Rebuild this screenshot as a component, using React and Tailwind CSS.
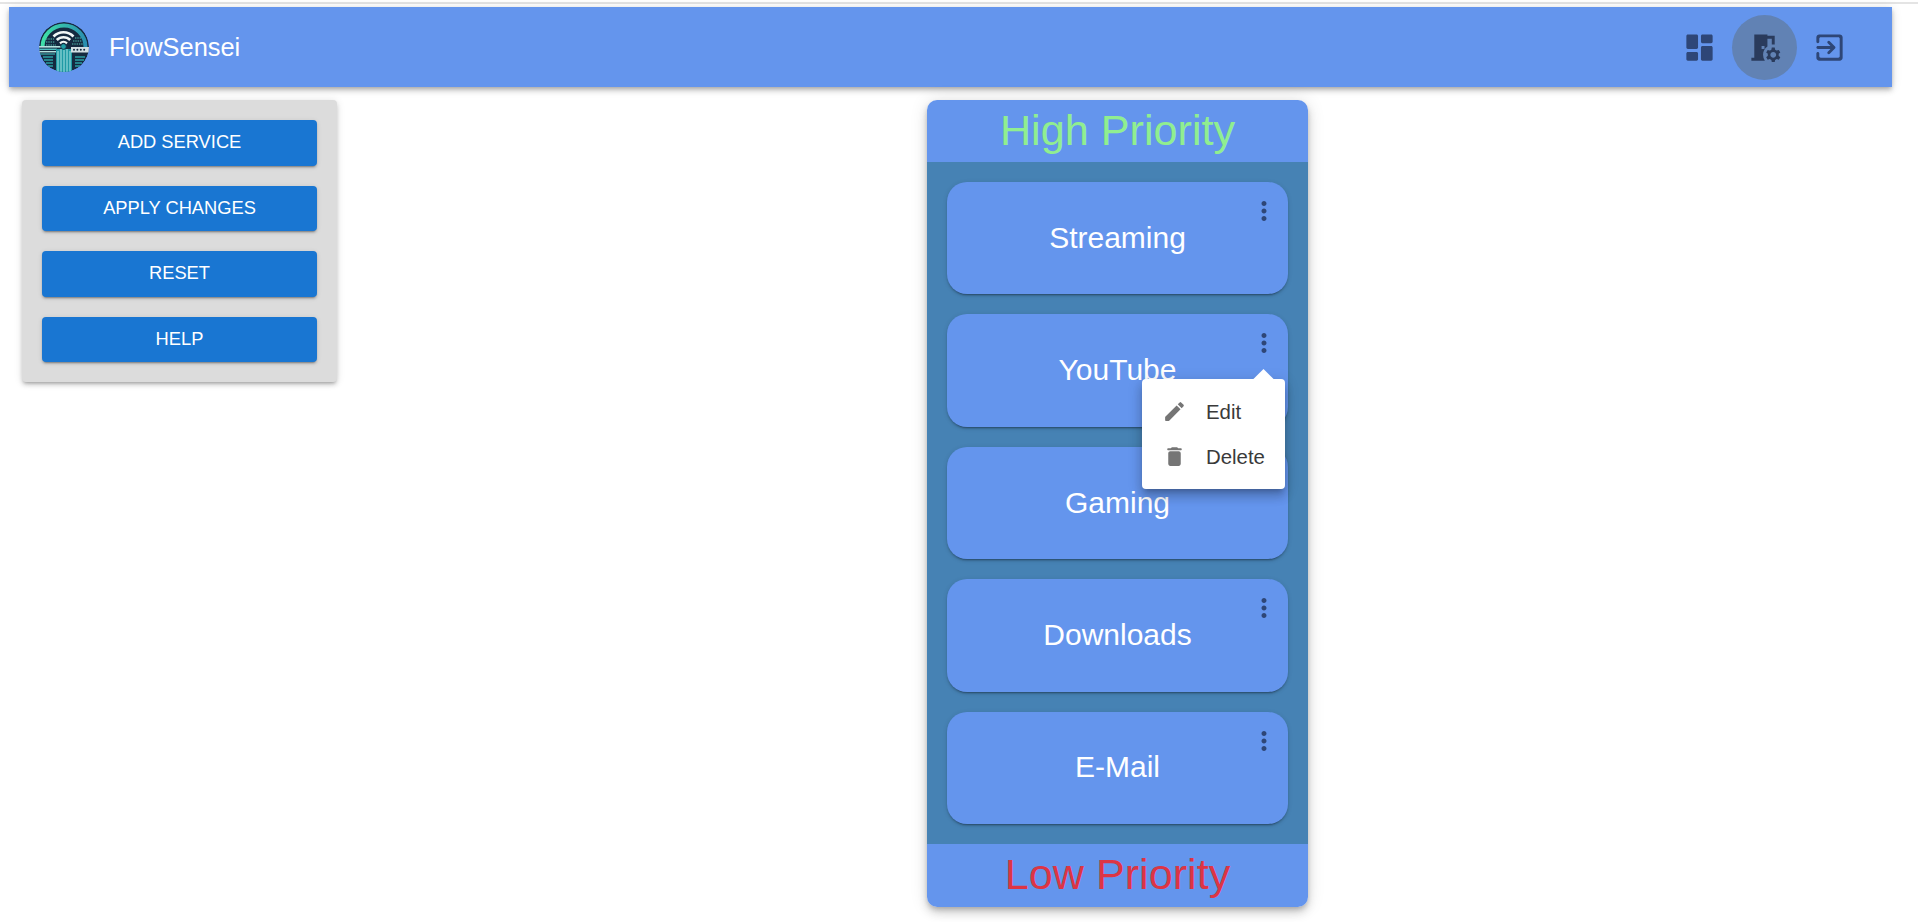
import React from 'react';
import { MdRoomPreferences, MdMoreVert } from 'react-icons/md';

const actions = ['ADD SERVICE', 'APPLY CHANGES', 'RESET', 'HELP'];
const services = ['Streaming', 'YouTube', 'Gaming', 'Downloads', 'E-Mail'];

// rounded variants, react-icons only ships the sharp ones
const Icon = ({ d, className }) => (
  <svg viewBox="0 0 24 24" fill="currentColor" className={className}>
    <path d={d} />
  </svg>
);

const dashboardPath = 'M4 13h6c.55 0 1-.45 1-1V4c0-.55-.45-1-1-1H4c-.55 0-1 .45-1 1v8c0 .55.45 1 1 1zm0 8h6c.55 0 1-.45 1-1v-4c0-.55-.45-1-1-1H4c-.55 0-1 .45-1 1v4c0 .55.45 1 1 1zm10 0h6c.55 0 1-.45 1-1v-8c0-.55-.45-1-1-1h-6c-.55 0-1 .45-1 1v8c0 .55.45 1 1 1zM13 4v4c0 .55.45 1 1 1h6c.55 0 1-.45 1-1V4c0-.55-.45-1-1-1h-6c-.55 0-1 .45-1 1z';
const exitPath = 'M10.79 16.29c.39.39 1.02.39 1.41 0l3.59-3.59c.39-.39.39-1.02 0-1.41L12.2 7.7a.9959.9959 0 0 0-1.41 0c-.39.39-.39 1.02 0 1.41L12.67 11H4c-.55 0-1 .45-1 1s.45 1 1 1h8.67l-1.88 1.88c-.39.39-.38 1.03 0 1.41zM19 3H5c-1.11 0-2 .9-2 2v3c0 .55.45 1 1 1s1-.45 1-1V6c0-.55.45-1 1-1h12c.55 0 1 .45 1 1v12c0 .55-.45 1-1 1H6c-.55 0-1-.45-1-1v-2c0-.55-.45-1-1-1s-1 .45-1 1v3c0 1.1.9 2 2 2h14c1.1 0 2-.9 2-2V5c0-1.1-.9-2-2-2z';
const editPath = 'M3 17.46v3.04c0 .28.22.5.5.5h3.04c.13 0 .26-.05.35-.15L17.81 9.94l-3.75-3.75L3.15 17.1c-.1.1-.15.22-.15.36zM20.71 7.04c.39-.39.39-1.02 0-1.41l-2.34-2.34a.9959.9959 0 0 0-1.41 0l-1.83 1.83 3.75 3.75 1.83-1.83z';
const deletePath = 'M6 19c0 1.1.9 2 2 2h8c1.1 0 2-.9 2-2V9c0-1.1-.9-2-2-2H8c-1.1 0-2 .9-2 2v10zM18 4h-2.5l-.71-.71c-.18-.18-.44-.29-.7-.29H9.91c-.26 0-.52.11-.7.29L8.5 4H6c-.55 0-1 .45-1 1s.45 1 1 1h12c.55 0 1-.45 1-1s-.45-1-1-1z';

const Logo = () => (
  <svg viewBox="0 0 50 50" className="w-[50px] h-[50px]">
    <defs>
      <clipPath id="logo-clip"><circle cx="25" cy="25" r="25" /></clipPath>
      <linearGradient id="logo-ring" x1="0" y1="0" x2="1" y2="0">
        <stop offset="0" stopColor="#3fe0a8" />
        <stop offset="1" stopColor="#2a8fb0" />
      </linearGradient>
    </defs>
    <g clipPath="url(#logo-clip)">
      <circle cx="25" cy="25" r="25" fill="#152a40" />
      {/* outer ring */}
      <path d="M3.5 25A21.5 21.5 0 0 1 46.5 25" fill="none" stroke="url(#logo-ring)" strokeWidth="4" />
      {/* small grid blocks */}
      <path d="M7 17h8M7 20h9M7 23h10M36 16h6M34 19h9M33 22h11" stroke="#3f8f8c" strokeWidth="1.4" strokeDasharray="1.4 0.9" />
      {/* wifi arcs */}
      <path d="M14.5 14.5A14 14 0 0 1 34.5 14.5" fill="none" stroke="#f1f7f7" strokeWidth="2.6" />
      <path d="M17.8 18A9.5 9.5 0 0 1 31.2 18" fill="none" stroke="#f1f7f7" strokeWidth="2.6" />
      <path d="M21 21.4A5 5 0 0 1 28 21.4" fill="none" stroke="#f1f7f7" strokeWidth="2.2" />
      {/* horizontal traces */}
      <rect x="0" y="24" width="22" height="1.6" fill="#b5e3e0" />
      <rect x="0" y="26.6" width="18" height="1.4" fill="#4fc0bf" />
      <rect x="0" y="29" width="17" height="1.4" fill="#b5e3e0" />
      <rect x="0" y="31.4" width="16" height="1.2" fill="#3aa9ab" />
      <path d="M4 35h10M5 38h9M7 41h7M9 44h5" stroke="#2a9ea3" strokeWidth="1.6" />
      <path d="M46 35H36M45 38H36M43 41h-7M41 44h-5" stroke="#2a9ea3" strokeWidth="1.6" />
      {/* stem */}
      <rect x="17" y="27" width="16" height="23" fill="#1f9aa5" />
      <path d="M19 29v21M22 27v23M25 28v22M28 27v23M31 29v21" stroke="#a9e4e4" strokeWidth="1" />
      <circle cx="24.5" cy="24.5" r="2.8" fill="#1f9ea6" stroke="#152a40" strokeWidth="0.8" />
      {/* router box */}
      <rect x="32" y="25" width="18" height="5.5" fill="#d3dfe3" />
      <g fill="#152a40">
        <circle cx="35" cy="27.7" r="1" /><circle cx="38.4" cy="27.7" r="1" /><circle cx="41.8" cy="27.7" r="1" /><circle cx="45.2" cy="27.7" r="1" />
      </g>
    </g>
  </svg>
);

const App = () => {
  return (
    <div className="min-h-[922px] bg-white pt-[2px] font-['Liberation_Sans',Arial,sans-serif]">
      <div className="h-[5px] border-t-2 border-[#e4e4e4]" />

      {/* App bar */}
      <header className="ml-[9px] mr-[26px] h-[80px] bg-[#6495ed] flex items-center justify-between pl-[30px] pr-[30px] shadow-[0_2px_4px_-1px_rgba(0,0,0,0.2),0_4px_5px_0_rgba(0,0,0,0.14),0_1px_10px_0_rgba(0,0,0,0.12)]">
        <div className="flex items-center gap-5">
          <Logo />
          <span className="pt-[1px] text-[25.4px] text-white leading-none">FlowSensei</span>
        </div>
        <div className="flex items-center">
          <button className="p-[15px] rounded-full text-[#2e4677]">
            <Icon d={dashboardPath} className="w-[35px] h-[35px] block" />
          </button>
          <button className="p-[15px] rounded-full bg-[#6182b4] text-[#2a3b5c]">
            <MdRoomPreferences className="w-[35px] h-[35px] block" />
          </button>
          <button className="p-[15px] rounded-full text-[#2e4677]">
            <Icon d={exitPath} className="w-[35px] h-[35px] block" />
          </button>
        </div>
      </header>

      <main className="flex items-start pt-[13px]">
        {/* Actions panel */}
        <aside className="ml-[22px] w-[315px] bg-[#dcdcdc] rounded p-5 flex flex-col gap-5 shadow-[0_3px_3px_-2px_rgba(0,0,0,0.2),0_3px_4px_0_rgba(0,0,0,0.14),0_1px_8px_0_rgba(0,0,0,0.12)]">
          {actions.map((label) => (
            <button
              key={label}
              className="h-[45.5px] pb-[2px] rounded bg-[#1976d2] text-white text-[18.3px] shadow-[0_3px_1px_-2px_rgba(0,0,0,0.2),0_2px_2px_0_rgba(0,0,0,0.14),0_1px_5px_0_rgba(0,0,0,0.12)]"
            >
              {label}
            </button>
          ))}
        </aside>

        {/* Priority column */}
        <section className="ml-[590px] w-[381px] h-[807px] rounded-[10px] flex flex-col shadow-[0_3px_5px_-1px_rgba(0,0,0,0.2),0_6px_10px_0_rgba(0,0,0,0.14),0_1px_18px_0_rgba(0,0,0,0.12)]">
          <div className="h-[62px] pb-[2px] rounded-t-[10px] bg-[#6495ed] flex items-center justify-center text-[43.2px] text-[#90ee90]">
            High Priority
          </div>
          <div className="flex-1 bg-[#4682b4] p-5 flex flex-col gap-5">
            {services.map((name, i) => (
              <div
                key={name}
                className="relative flex-1 pb-[2px] rounded-[20px] bg-[#6495ed] flex items-center justify-center text-[30px] text-white shadow-[0_3px_1px_-2px_rgba(0,0,0,0.2),0_2px_2px_0_rgba(0,0,0,0.14),0_1px_5px_0_rgba(0,0,0,0.12)]"
              >
                {name}
                <MdMoreVert className="absolute top-[14px] right-[9px] w-[30px] h-[30px] text-[#2e4677]" />
                {i === 1 && (
                  <div className="absolute z-10 left-[195px] top-[65px] w-[143px] h-[110px] rounded bg-white pt-[10px] text-[20.4px] text-[#3a3a3a] shadow-[0_5px_5px_-3px_rgba(0,0,0,0.2),0_8px_10px_1px_rgba(0,0,0,0.14),0_3px_14px_2px_rgba(0,0,0,0.12)]">
                    <div className="absolute -top-[7px] right-[14px] w-[15px] h-[15px] rotate-45 bg-white" />
                    <div className="relative h-[45px] flex items-center pl-5">
                      <Icon d={editPath} className="w-[25px] h-[25px] text-[#757575]" />
                      <span className="ml-[19px]">Edit</span>
                    </div>
                    <div className="relative h-[45px] flex items-center pl-5">
                      <Icon d={deletePath} className="w-[25px] h-[25px] text-[#757575]" />
                      <span className="ml-[19px]">Delete</span>
                    </div>
                  </div>
                )}
              </div>
            ))}
          </div>
          <div className="h-[63px] pb-[2px] rounded-b-[10px] bg-[#6495ed] flex items-center justify-center text-[43.2px] text-[#dc3545]">
            Low Priority
          </div>
        </section>
      </main>
    </div>
  );
};

export default App;
